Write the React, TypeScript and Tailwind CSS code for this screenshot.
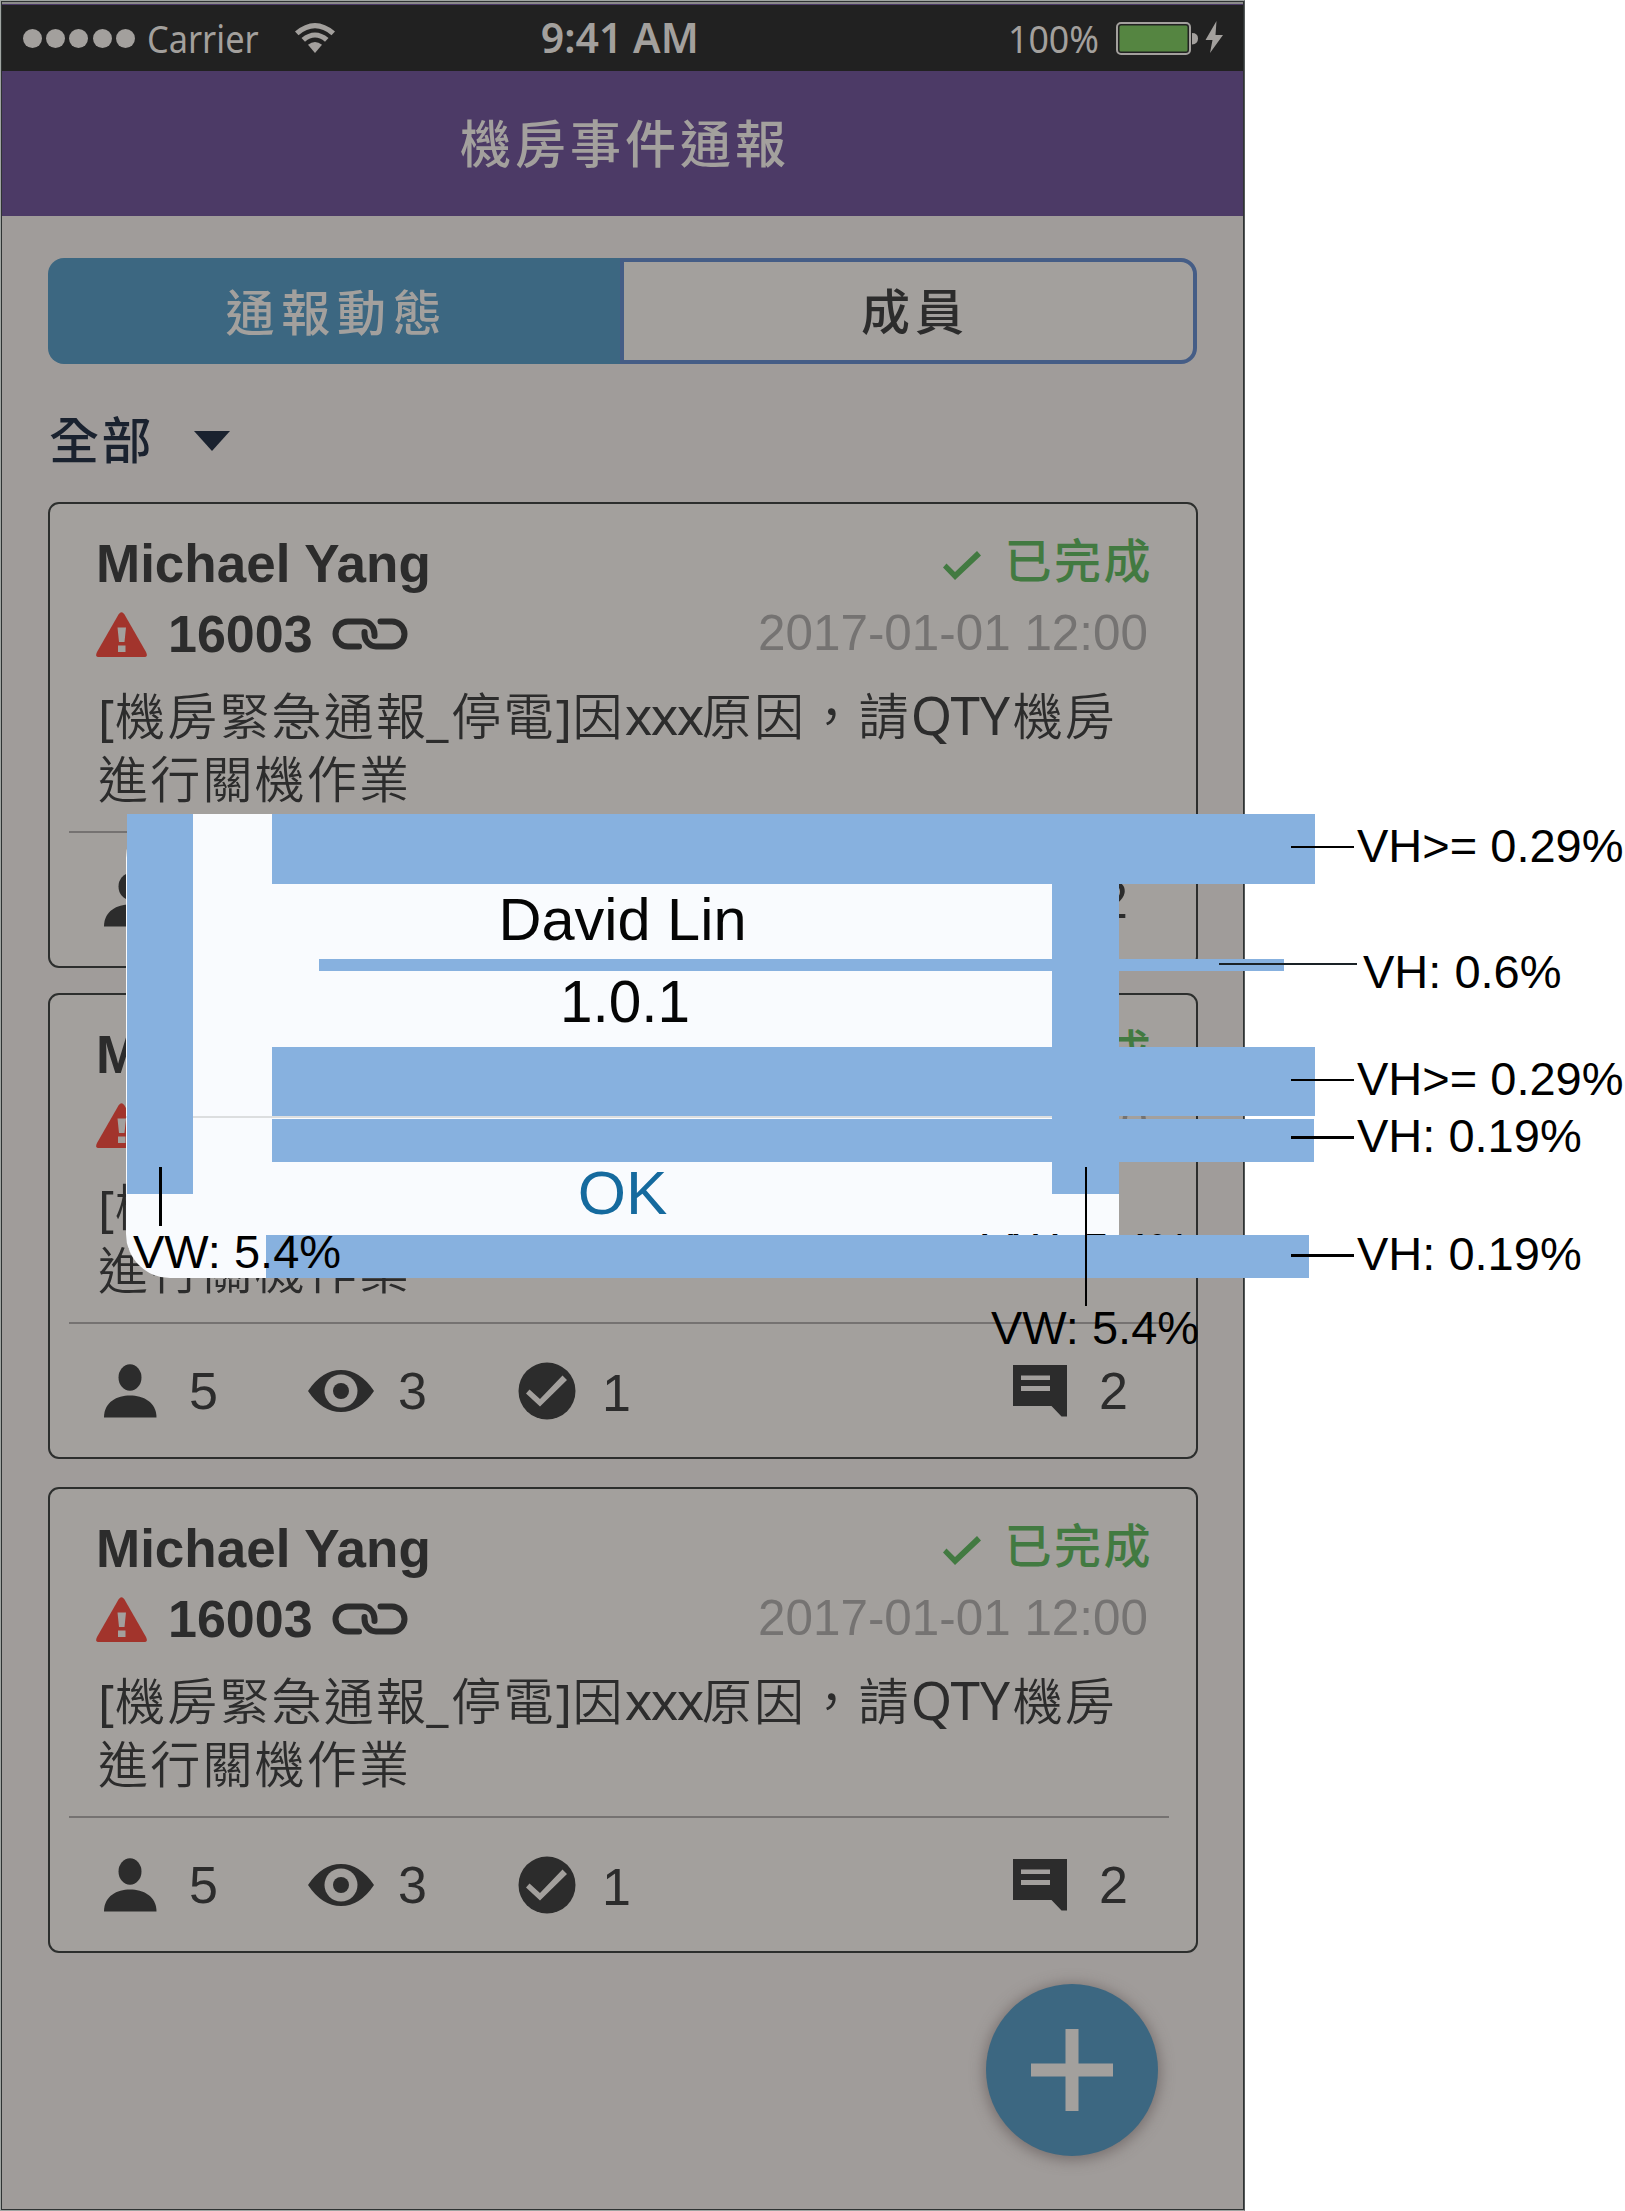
import React from "react";

const SANS = "font-['Liberation_Sans',sans-serif]";
const TC = "font-['Noto_Sans_CJK_TC',sans-serif]";
const LATIN = "inline-block font-['Noto_Sans',sans-serif] font-normal leading-none";

function Wifi() {
  return (
    <svg className="block h-[32px] w-[42px]" viewBox="0 0 42 32" fill="#a3a09d">
      <path d="M1 9.5Q21-7.500 41 9.500L37.500 13.200Q21-.500 4.500 13.200Z" />
      <path d="M7.500 16Q21 5 34.500 16L31 19.700Q21 11.500 11 19.700Z" />
      <path d="M14 22.800Q21 17 28 22.800L21 31Z" />
    </svg>
  );
}

function Battery() {
  return (
    <svg className="block h-[36px] w-[108px]" viewBox="0 0 108 36">
      <rect x="1" y="3" width="73" height="31" rx="4" fill="none" stroke="#a3a09d" strokeWidth="2" />
      <rect x="3.500" y="5.500" width="68" height="26" rx="1.500" fill="#558541" />
      <path d="M76 13Q82 13 82 18.500T76 24.500Z" fill="#a3a09d" />
      <path d="M100.500 1 89.500 20H96.500L94 33 107 15H99.500Z" fill="#a3a09d" />
    </svg>
  );
}

function StatusBar() {
  return (
    <div className="flex h-[66px] items-center bg-[#212121] text-[#a3a09d]">
      <div className="ml-[21px] flex gap-[4.2px]">
        {[0, 1, 2, 3, 4].map((i) => (
          <span key={i} className="size-[19px] rounded-full bg-[#a3a09d]" />
        ))}
      </div>
      <div className="mt-[-2px] ml-[12px] w-[147px] origin-left scale-x-[0.88] font-['Noto_Sans',sans-serif] text-[39px] leading-none">Carrier</div>
      <div className="w-[247px]"><Wifi /></div>
      <div className="mt-[-2px] w-[467px] font-['Noto_Sans',sans-serif] text-[41px] font-semibold leading-none">9:41 AM</div>
      <div className="mt-[-1px] w-[108px] origin-left scale-x-[0.94] font-['Noto_Sans',sans-serif] text-[38px] leading-none">100%</div>
      <Battery />
    </div>
  );
}

function Tabs() {
  return (
    <div className={`mt-[42px] ml-[46px] flex h-[106px] w-[1149px] text-[49px] leading-none ${TC}`}>
      <div className="flex w-[572px] items-center justify-center rounded-l-[16px] bg-[#3c6781] pb-[4px] pl-[6px] font-medium tracking-[6.700px] text-[#a3a09d]">
        通報動態
      </div>
      <div className="flex w-[577px] items-center justify-center rounded-r-[16px] border-4 border-[#455d86] bg-[#a3a09d] pb-[5px] pl-[13px] font-medium tracking-[5px] text-[#2c2c2c]">
        成員
      </div>
    </div>
  );
}

function Warning() {
  return (
    <svg className="block h-[45px] w-[51px]" viewBox="0 0 51 45">
      <path d="M22.500 2.500Q25.500-2 28.500 2.500L50 40Q52.500 45 48 45H3Q-1.500 45 1 40Z" fill="#a2342c" />
      <path d="M21.500 15.500H30L28.500 30H23ZM22 33.500H29.500V40H22Z" fill="#a3a09d" />
    </svg>
  );
}

function LinkIcon() {
  return (
    <svg className="block h-[32px] w-[78px]" viewBox="0 0 78 32" fill="none" stroke="#2c2c2c" strokeWidth="6" strokeLinecap="round">
      <path d="M28 28.500H17A12.500 12.500 0 0 1 17 3.500H32A11.500 12.500 0 0 1 43.500 16V18" />
      <path d="M49.500 3.500H61A12.500 12.500 0 0 1 61 28.500H45A11.500 12.500 0 0 1 33.500 16V14" />
    </svg>
  );
}

function Check() {
  return (
    <svg className="block h-[30px] w-[40px]" viewBox="0 0 40 30">
      <path d="M1 17.500 4.500 13.500 13 22 35 1 39 5.500 13 30Z" fill="#427a41" />
    </svg>
  );
}

function Stats() {
  return (
    <div className="flex text-[52px] leading-none text-[#2c2c2c]">
      <svg className="mt-[40px] ml-[53px] h-[54px] w-[54px]" viewBox="0 0 54 54" fill="#2c2c2c">
        <ellipse cx="27" cy="13.500" rx="11.500" ry="13.200" />
        <path d="M1 53.500C1 38 14 31.500 27 31.500S53.500 38 53.500 53.500Z" />
      </svg>
      <span className="mt-[41px] ml-[32px] w-[119px]">5</span>
      <svg className="mt-[46px] h-[42px] w-[66px]" viewBox="0 0 66 42">
        <path d="M0 21Q14 0 33 0T66 21Q52 42 33 42T0 21Z" fill="#2c2c2c" />
        <circle cx="33" cy="21" r="16.500" fill="#a3a09d" />
        <circle cx="33" cy="21" r="8" fill="#2c2c2c" />
      </svg>
      <span className="mt-[41px] ml-[24px] w-[120px]">3</span>
      <svg className="mt-[38px] h-[58px] w-[58px]" viewBox="0 0 58 58">
        <circle cx="29" cy="29" r="28.500" fill="#2c2c2c" />
        <path d="M8 31.500 11.500 27.500 22 37 44.500 13.500 49 18 22 44.500Z" fill="#a3a09d" />
      </svg>
      <span className="mt-[43px] ml-[26px] w-[411px]">1</span>
      <svg className="mt-[40px] h-[53px] w-[54px]" viewBox="0 0 54 53">
        <path d="M0 1H54V52.500H48.500L38.500 42H0Z" fill="#2c2c2c" />
        <path d="M8 11.500H37V16H8ZM8 22H37V27H8Z" fill="#a3a09d" />
      </svg>
      <span className="mt-[41px] ml-[32px]">2</span>
    </div>
  );
}

function Card() {
  return (
    <article className={`ml-[46px] flex h-[466px] w-[1150px] flex-col overflow-hidden rounded-[11px] border-2 border-[#2c2e2d] bg-[#a3a09d] text-[#2c2c2c] ${SANS}`}>
      <div className="mt-[33px] ml-[46px] flex h-[71px] w-[1057px] justify-between">
        <h2 className="text-[53px] font-bold leading-none">Michael Yang</h2>
        <div className="flex">
          <div className="mt-[13px] mr-[23px]"><Check /></div>
          <span className={`-mt-[3px] text-[47px] font-medium leading-[48px] tracking-[2.500px] text-[#427a41] ${TC}`}>已完成</span>
        </div>
      </div>
      <div className="ml-[46px] flex h-[69px] w-[1052px]">
        <div className="mt-[4px]"><Warning /></div>
        <span className="ml-[21px] w-[163px] text-[52px] font-bold leading-none">16003</span>
        <div className="mt-[10px]"><LinkIcon /></div>
        <span className="ml-auto text-[49.400px] leading-none text-[#757372]">2017-01-01 12:00</span>
      </div>
      <p className={`mt-[5px] ml-[48px] h-[149px] whitespace-nowrap text-[50px] font-[350] leading-[62.700px] tracking-[2.200px] ${TC}`}>
        <span className={`w-[17px] tracking-normal ${LATIN}`}>[</span>機房緊急通報
        <span className={`-ml-[2px] w-[25px] tracking-normal ${LATIN}`}>_</span>停電
        <span className={`w-[17px] tracking-normal ${LATIN}`}>]</span>因
        <span className={`w-[77px] text-[52px] tracking-[-1.500px] ${LATIN}`}>xxx</span>原因，請
        <span className={`w-[102px] text-[53px] tracking-normal ${LATIN}`}>QTY</span>機房
        <br />
        進行關機作業
      </p>
      <div className="ml-[19px] h-[2px] w-[1100px] shrink-0 bg-[#757271]" />
      <Stats />
    </article>
  );
}

function Label({ className, children }: { className: string; children: React.ReactNode }) {
  return <div className={`absolute whitespace-nowrap text-[47px] leading-none text-black ${className}`}>{children}</div>;
}

/* Spacing guides laid over the dialog, each with its measure. */
function Guides() {
  return (
    <>
      <div className="absolute top-[814px] left-[272px] h-[70px] w-[1043px] bg-[#87b1df]" />
      <div className="absolute top-[959px] left-[319px] h-[12px] w-[965px] bg-[#87b1df]" />
      <div className="absolute top-[1047px] left-[272px] h-[69px] w-[1043px] bg-[#87b1df]" />
      <div className="absolute top-[1119px] left-[272px] h-[43px] w-[1042px] bg-[#87b1df]" />
      <div className="absolute top-[1235px] left-[266px] h-[43px] w-[1043px] bg-[#87b1df]" />
      <div className="absolute top-[814px] left-[127px] h-[380px] w-[66px] bg-[#87b1df]" />
      <div className="absolute top-[814px] left-[1052px] h-[380px] w-[67px] bg-[#87b1df]" />

      <div className="absolute top-[846px] left-[1291px] h-[2px] w-[63px] bg-black" />
      <div className="absolute top-[963px] left-[1219px] h-[2px] w-[138px] bg-[#1a2226]" />
      <div className="absolute top-[1079px] left-[1291px] h-[2px] w-[63px] bg-black" />
      <div className="absolute top-[1136px] left-[1291px] h-[3px] w-[63px] bg-black" />
      <div className="absolute top-[1254px] left-[1291px] h-[3px] w-[63px] bg-black" />
      <div className="absolute top-[1167px] left-[159px] h-[59px] w-[3px] bg-black" />
      <div className="absolute top-[1167px] left-[1085px] h-[139px] w-[2px] bg-black" />

      <Label className="top-[822px] left-[1357px]">VH&gt;= 0.29%</Label>
      <Label className="top-[948px] left-[1363px]">VH: 0.6%</Label>
      <Label className="top-[1055px] left-[1357px]">VH&gt;= 0.29%</Label>
      <Label className="top-[1112px] left-[1357px]">VH: 0.19%</Label>
      <Label className="top-[1230px] left-[1357px]">VH: 0.19%</Label>
      <Label className="top-[1228px] left-[133px]">VW: 5.4%</Label>
      <Label className="top-[1304px] left-[991px]">VW: 5.4%</Label>
    </>
  );
}

function Dialog() {
  return (
    <div className="absolute top-[814px] left-[126px] flex h-[464px] w-[993px] flex-col items-center rounded-[44px] bg-[#f9fbfe] text-[#050505]">
      <div className="mt-[76px] text-[59.500px] leading-[59px]">David Lin</div>
      <div className="mt-[23px] ml-[5px] text-[58.500px] leading-[59px]">1.0.1</div>
      <div className="mt-[85px] h-[2px] w-full shrink-0 bg-[#dcdedf]" />
      <div className="mt-[44px] text-[62px] leading-none text-[#156a9e]">OK</div>
    </div>
  );
}

export default function App() {
  return (
    <div className={`relative h-[2211px] w-[1625px] overflow-hidden bg-white ${SANS}`}>
      <div className="h-[2211px] w-[1245px] border border-[#a0a5a2] border-r-[#55595a]">
        <main className="h-full border border-[#2f3333] bg-[#a09c9a]">
          <div className="h-[2px] bg-[#8b8b8b]" />
          <div className="h-[1px] bg-[#4c3a66]" />
          <StatusBar />
          <header className={`flex h-[145px] items-center justify-center bg-[#4c3a66] pb-[4px] pl-[5px] text-[51px] font-medium leading-none tracking-[4px] text-[#a3a09d] ${TC}`}>
            機房事件通報
          </header>
          <Tabs />
          <div className="mt-[50px] ml-[47px] flex h-[88px] items-start text-[#1a222f]">
            <span className={`-mt-[4px] text-[50px] font-medium leading-[54px] tracking-[2.500px] ${TC}`}>全部</span>
            <svg className="mt-[17px] ml-[40px] h-[20px] w-[36px]" viewBox="0 0 36 20" fill="#1a222f">
              <path d="M0 0H36L18 20Z" />
            </svg>
          </div>
          <div className="flex flex-col gap-[25px]">
            <Card />
            <Card />
            <div className="mt-[3px]"><Card /></div>
          </div>
          <button className="mt-[31px] ml-[984px] flex size-[172px] items-center justify-center rounded-full bg-[#3c6781] shadow-[0_2px_14px_2px_rgba(90,80,80,0.6)]">
            <svg className="size-[82px]" viewBox="0 0 82 82" fill="#a3a09d">
              <path d="M34.500 0H47.500V34.500H82V47.500H47.500V82H34.500V47.500H0V34.500H34.500Z" />
            </svg>
          </button>
        </main>
      </div>
      <Dialog />
      <Label className="top-[1226px] left-[982px]">VW: 5.4%</Label>
      <Guides />
    </div>
  );
}
